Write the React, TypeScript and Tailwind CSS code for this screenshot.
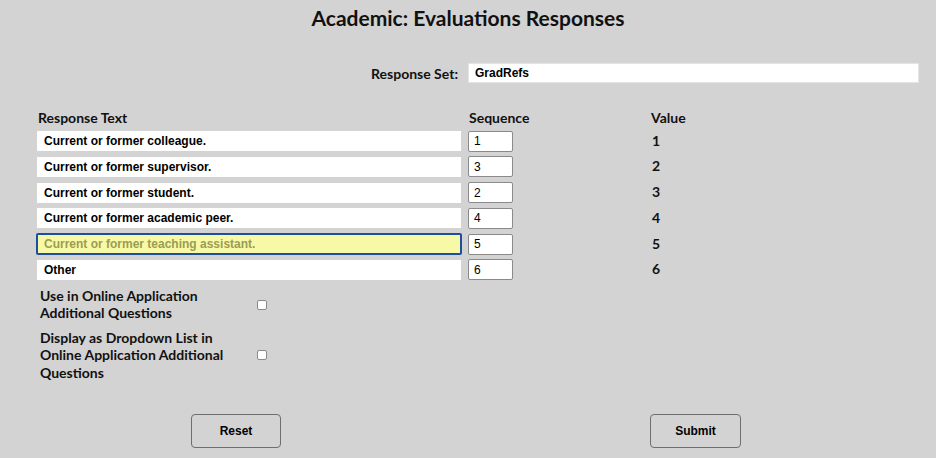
import React from "react";

const rows = [
  { text: "Current or former colleague.", seq: "1", value: "1" },
  { text: "Current or former supervisor.", seq: "3", value: "2" },
  { text: "Current or former student.", seq: "2", value: "3" },
  { text: "Current or former academic peer.", seq: "4", value: "4" },
  { text: "Current or former teaching assistant.", seq: "5", value: "5", focus: true },
  { text: "Other", seq: "6", value: "6" },
];

const label = "font-['Lato',sans-serif] font-bold text-[14px] text-[#111]";

export default function App() {
  return (
    <div className="w-[936px] h-[458px] bg-[#d3d3d3] overflow-hidden relative">
      <h1 className="font-['Lato',sans-serif] font-bold text-[21px] leading-[24px] text-[#111] text-center pt-[6px]">
        Academic: Evaluations Responses
      </h1>

      <div className="flex items-center mt-[33px] h-[20px]">
        <div className={`${label} w-[458px] text-right`}>Response Set:</div>
        <div className="ml-[10px] w-[451px] h-[20px] bg-white border border-[#e4e4e4] flex items-center pl-[6px] font-['Liberation_Sans',Arial,sans-serif] font-bold text-[12px] text-black">
          GradRefs
        </div>
      </div>

      <div className="pl-[37px] mt-[26px]">
        <div className="flex h-[16px] items-center">
          <div className={`${label} w-[431px] pl-[1px]`}>Response Text</div>
          <div className={`${label} w-[183px] pl-[1px]`}>Sequence</div>
          <div className={label}>Value</div>
        </div>
        <div className="flex flex-col gap-[5.8px] mt-[6px]">
          {rows.map((r) => (
            <div key={r.seq} className="flex items-center h-[20px]">
              {r.focus ? (
                <div className="w-[426px] h-[22px] -ml-[1px] mr-[6px] bg-[#f7f9a6] border-2 border-[#1d4f9e] rounded-[2px] flex items-center pl-[6px] font-['Liberation_Sans',Arial,sans-serif] font-bold text-[12px] text-[#9c9c52]">
                  {r.text}
                </div>
              ) : (
                <div className="w-[424px] h-[20px] mr-[7px] bg-white flex items-center pl-[7px] font-['Liberation_Sans',Arial,sans-serif] font-bold text-[12px] text-black">
                  {r.text}
                </div>
              )}
              <div className="w-[45px] h-[21px] bg-white border border-[#8a8a8a] rounded-[2px] flex items-center pl-[5px] font-['Liberation_Sans',Arial,sans-serif] text-[12px] text-black">
                {r.seq}
              </div>
              <div className={`${label} ml-[139px] -mt-[2px]`}>{r.value}</div>
            </div>
          ))}
        </div>

        <div className="mt-[7px] pl-[3px] flex flex-col gap-[8px]">
          <div className="flex items-center">
            <div className={`${label} leading-[17px] w-[217px] whitespace-nowrap`}>
              Use in Online Application
              <br />
              Additional Questions
            </div>
            <span className="w-[10px] h-[10px] bg-white border border-[#8a8a8a] rounded-[2px] mt-[2px]" />
          </div>
          <div className="flex items-center">
            <div className={`${label} leading-[17.5px] w-[217px] whitespace-nowrap`}>
              Display as Dropdown List in
              <br />
              Online Application Additional
              <br />
              Questions
            </div>
            <span className="w-[10px] h-[10px] bg-white border border-[#8a8a8a] rounded-[2px] mt-[0px]" />
          </div>
        </div>
      </div>

      <div className="flex mt-[33px] pl-[191px] gap-[369px]">
        <button className="w-[90px] h-[34px] border border-[#6e6e6e] rounded-[4px] bg-[#d3d3d3] font-['Liberation_Sans',Arial,sans-serif] font-bold text-[12px] text-black">
          Reset
        </button>
        <button className="w-[91px] h-[34px] border border-[#6e6e6e] rounded-[4px] bg-[#d3d3d3] font-['Liberation_Sans',Arial,sans-serif] font-bold text-[12px] text-black">
          Submit
        </button>
      </div>
    </div>
  );
}
